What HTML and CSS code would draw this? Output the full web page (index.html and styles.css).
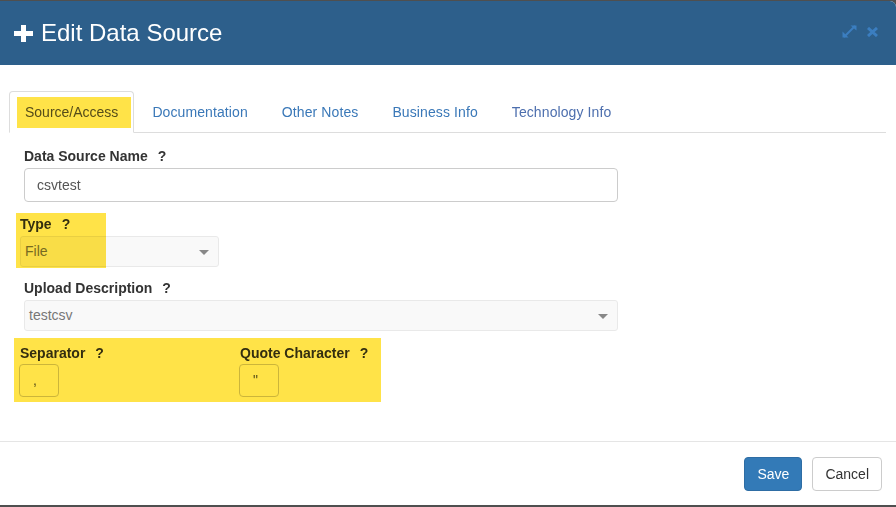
FILE: index.html
```html
<!DOCTYPE html>
<html>
<head>
<meta charset="utf-8">
<link rel="stylesheet" href="styles.css">
</head>
<body>
<div class="modal">
  <div class="modal-header">
    <h4 class="modal-title">
      <svg class="plus" width="19" height="17" viewBox="0 0 19 17"><path d="M7 0h5v6h7v5h-7v6H7v-6H0V6h7z" fill="#fff"/></svg>
      Edit Data Source
    </h4>
    <div class="header-tools">
      <svg class="tool" width="15" height="13" viewBox="0 0 15 13"><path d="M2 12L13 1" stroke="#3b7ec0" stroke-width="2"/><path d="M8.5 0.5h6v5z" fill="#3b7ec0"/><path d="M0.5 6.5v6h6z" fill="#3b7ec0"/></svg>
      <svg class="tool" width="11" height="10" viewBox="0 0 11 10"><path d="M1 1l9 8M10 1l-9 8" stroke="#3b7ec0" stroke-width="3"/></svg>
    </div>
  </div>
  <div class="modal-body">
    <ul class="nav-tabs">
      <li class="active"><a>Source/Access<span class="hl hl-tab"></span></a></li>
      <li><a>Documentation</a></li>
      <li><a>Other Notes</a></li>
      <li><a>Business Info</a></li>
      <li><a class="visited">Technology Info</a></li>
    </ul>
    <div class="form">
      <div class="group g-name">
        <label>Data Source Name<span class="q">?</span></label>
        <div class="input wide">csvtest</div>
      </div>
      <div class="group g-type">
        <label>Type<span class="q">?</span></label>
        <div class="select short">File<span class="caret"></span></div>
        <span class="hl hl-type"></span>
      </div>
      <div class="group g-upload">
        <label>Upload Description<span class="q">?</span></label>
        <div class="select wide">testcsv<span class="caret"></span></div>
      </div>
      <div class="sep-row">
        <div class="group g-sep">
          <label>Separator<span class="q">?</span></label>
          <div class="input tiny">,</div>
        </div>
        <div class="group g-quote">
          <label>Quote Character<span class="q">?</span></label>
          <div class="input tiny">"</div>
        </div>
        <span class="hl hl-sep"></span>
      </div>
    </div>
  </div>
  <div class="modal-footer">
    <button class="btn btn-primary">Save</button>
    <button class="btn btn-default">Cancel</button>
  </div>
</div>
</body>
</html>
```
FILE: styles.css
```css
* { box-sizing: border-box; }
html, body {
  margin: 0;
  padding: 0;
  background: #4f4f4f;
  width: 896px;
  height: 507px;
  overflow: hidden;
}
body {
  font-family: "Liberation Sans", Arial, sans-serif;
  font-size: 14px;
  line-height: 20px;
  color: #333;
  padding-top: 1px;
}
.modal {
  width: 896px;
  height: 504px;
  background: #fff;
  border-top-right-radius: 6px;
  display: flex;
  flex-direction: column;
  overflow: hidden;
}
.modal-header {
  height: 64px;
  flex: none;
  background: #2d5f8b;
  display: flex;
  align-items: center;
  justify-content: space-between;
  padding: 0 18px 0 14px;
}
.modal-title {
  margin: 0;
  font-weight: normal;
  font-size: 24px;
  line-height: 28px;
  color: #fff;
  display: flex;
  align-items: center;
}
.plus {
  margin-right: 8px;
}
.header-tools {
  display: flex;
  align-items: center;
  gap: 10px;
  margin-top: -3px;
}
.modal-body {
  flex: 1;
  padding: 26px 10px 0 9px;
}
.nav-tabs {
  list-style: none;
  margin: 0;
  padding: 0;
  display: flex;
  border-bottom: 1px solid #ddd;
}
.nav-tabs li {
  margin-right: 2px;
  margin-bottom: -1px;
}
.nav-tabs a {
  display: block;
  position: relative;
  padding: 10px 15px;
  border: 1px solid transparent;
  border-radius: 4px 4px 0 0;
  color: #3a78b8;
  letter-spacing: 0.1px;
}
.nav-tabs a.visited { color: #4d6fae; }
.nav-tabs li.active a {
  color: #555;
  background: #fff;
  border-color: #ddd #ddd transparent;
  letter-spacing: 0;
}
.hl {
  position: absolute;
  background: #ffe348;
  mix-blend-mode: multiply;
  pointer-events: none;
}
.hl-tab {
  left: 7px;
  top: 5px;
  width: 114px;
  height: 31px;
}
.form {
  padding-left: 15px;
}
label {
  display: block;
  font-weight: bold;
  line-height: 20px;
  margin-bottom: 2px;
  white-space: nowrap;
}
.q { margin-left: 10px; }
.group { position: relative; }
.g-name { margin-top: 13px; }
.g-type { margin-top: 12px; margin-left: -4px; }
.g-upload { margin-top: 11px; }
.input {
  height: 34px;
  border: 1px solid #ccc;
  border-radius: 4px;
  padding: 6px 12px;
  color: #555;
  background: #fff;
}
.input.wide { width: 594px; }
.input.tiny {
  width: 40px;
  height: 33px;
  padding: 5px 13px;
}
.select {
  position: relative;
  height: 31px;
  border: 1px solid #e9e9e9;
  border-radius: 3px;
  background: #f9f9f9;
  color: #777;
  padding: 4px 4px;
}
.select.short { width: 199px; }
.select.wide { width: 594px; }
.caret {
  position: absolute;
  right: 9px;
  top: 13px;
  width: 0;
  height: 0;
  border-left: 5px solid transparent;
  border-right: 5px solid transparent;
  border-top: 5px solid #888;
}
.hl-type {
  left: -4px;
  top: -1px;
  width: 90px;
  height: 55px;
}
.sep-row {
  position: relative;
  display: flex;
  margin-top: 12px;
  margin-left: -5px;
}
.sep-row label { margin-bottom: 1px; }
.g-sep { width: 220px; }
.g-sep label { margin-left: 1px; }
.g-quote label { margin-left: 1px; }
.hl-sep {
  left: -5px;
  top: -5px;
  width: 367px;
  height: 64px;
}
.modal-footer {
  flex: none;
  border-top: 1px solid #e5e5e5;
  padding: 15px 14px 14px;
  display: flex;
  justify-content: flex-end;
  gap: 10px;
}
.btn {
  font-family: inherit;
  font-size: 14px;
  line-height: 20px;
  height: 34px;
  padding: 6px 12px;
  border-radius: 4px;
  border: 1px solid transparent;
  cursor: pointer;
}
.btn-primary {
  background: #337ab7;
  border-color: #2e6da4;
  color: #fff;
}
.btn-default {
  background: #fff;
  border-color: #ccc;
  color: #333;
}
```
